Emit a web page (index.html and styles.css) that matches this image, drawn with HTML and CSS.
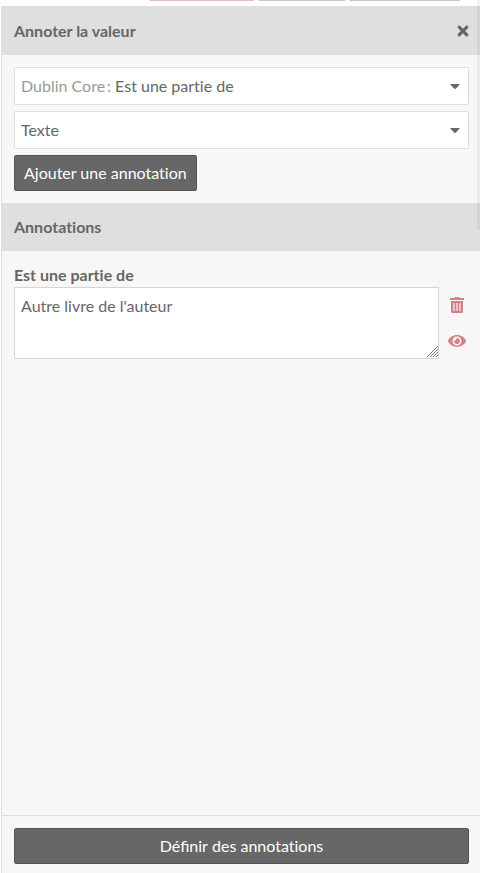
FILE: index.html
```html
<!DOCTYPE html>
<html lang="fr">
<head>
<meta charset="utf-8">
<meta name="viewport" content="width=device-width, initial-scale=1">
<title>Annoter la valeur</title>
<link rel="stylesheet" href="styles.css">
</head>
<body>
<div class="tabs" aria-hidden="true">
  <span class="tab tab-danger"></span>
  <span class="tab tab-short"></span>
  <span class="tab tab-long"></span>
</div>
<div class="scroll-thumb" aria-hidden="true"></div>
<aside class="sidebar">
  <header class="bar bar-top">
    <h3>Annoter la valeur</h3>
    <button class="icon-button" type="button" aria-label="Fermer">
      <svg width="12" height="12" viewBox="0 0 12 12"><path d="M2.2 2.2 9.8 9.8M9.8 2.2 2.2 9.8" fill="none" stroke="currentColor" stroke-width="3.1" stroke-linecap="round"/></svg>
    </button>
  </header>
  <div class="section controls">
    <div class="picker">
      <label class="prefix" for="property">Dublin Core&#8201;:</label>
      <select id="property"><option>Est une partie de</option></select>
      <svg class="caret" width="10" height="5" viewBox="0 0 10 5"><path d="M0 0H10L6 4.6Q5 5.3 4 4.6Z" fill="currentColor"/></svg>
    </div>
    <div class="picker">
      <select id="type" aria-label="Type de données"><option>Texte</option></select>
      <svg class="caret" width="10" height="5" viewBox="0 0 10 5"><path d="M0 0H10L6 4.6Q5 5.3 4 4.6Z" fill="currentColor"/></svg>
    </div>
    <button class="button" type="button">Ajouter une annotation</button>
  </div>
  <div class="bar"><h3>Annotations</h3></div>
  <div class="section annotations">
    <label class="field-label" for="annotation">Est une partie de</label>
    <div class="annotation">
      <div class="text-box">
        <textarea id="annotation">Autre livre de l'auteur</textarea>
        <svg class="grip" width="11" height="11" viewBox="0 0 11 11"><path d="M0 11 11 0M3 11 11 3M6 11 11 6M9 11 11 9" fill="none" stroke="#777" stroke-width="1"/></svg>
      </div>
      <div class="actions">
        <button class="icon-button" type="button" aria-label="Supprimer">
          <svg width="18" height="16" viewBox="0 0 18 16"><path fill="currentColor" fill-opacity=".45" d="M5 6H13V14H5Z"/><path fill="currentColor" fill-rule="evenodd" d="M2 1H6.2L6.7 .3Q7 0 7.4 0H10.6Q11 0 11.3 .3L11.8 1H16V3H2ZM3 4H15V14.500Q15 16 13.500 16H4.500Q3 16 3 14.500ZM5 6V14H7V6ZM8 6V14H10V6ZM11 6V14H13V6Z"/></svg>
        </button>
        <button class="icon-button" type="button" aria-label="Visibilité">
          <svg width="18" height="12" viewBox="0 0 18 12"><path fill="currentColor" fill-rule="evenodd" d="M9 0C4.900 0 1.700 2.300 .1 5.400Q-.2 6 .1 6.600C1.700 9.700 4.900 12 9 12S16.300 9.700 17.900 6.600Q18.200 6 17.900 5.400C16.300 2.300 13.100 0 9 0ZM9 1.500A4.500 4.500 0 1 1 9 10.500A4.500 4.500 0 1 1 9 1.500Z"/><path fill="currentColor" d="M8.200 3.100A3 3 0 1 1 6.100 5.200 1.500 1.500 0 0 0 8.200 3.100Z"/></svg>
        </button>
      </div>
    </div>
  </div>
  <footer class="footer"><button class="button" type="button"><span class="ligatures">Définir</span> des annotations</button></footer>
</aside>
</body>
</html>
```

FILE: styles.css
```css
* { box-sizing: border-box; }

body {
  margin: 0;
  min-height: 100vh;
  display: flex;
  flex-direction: column;
  background: #fff;
  color: #666;
  font: 16px/24px Lato, sans-serif;
  font-variant-ligatures: none;
}

h3 { margin: 0; font-size: 16px; line-height: 24px; font-weight: 700; }

button, select, textarea {
  font: inherit;
  font-variant-ligatures: none;
  color: inherit;
}

.ligatures { font-variant-ligatures: normal; }

.tabs {
  display: flex;
  justify-content: flex-end;
  gap: 5px;
  height: 6px;
  padding-right: 20px;
}

.tab { height: 1px; background: #c4c4c4; }
.tab-danger { width: 104px; background: #e3bfc1; }
.tab-short { width: 86px; }
.tab-long { width: 110px; }

.scroll-thumb {
  position: absolute;
  top: 0;
  right: 0;
  width: 3px;
  height: 230px;
  background: rgba(0, 0, 0, 0.05);
}

.sidebar {
  flex: 1;
  display: flex;
  flex-direction: column;
  margin-left: 1px;
  border-left: 1px solid #dfdfdf;
  background: #f7f7f7;
}

.bar {
  display: flex;
  align-items: center;
  justify-content: space-between;
  padding: 12px 11px 12px 12px;
  background: #dfdfdf;
}

.bar-top { border-top: 1px solid #dfdfdf; }

.icon-button {
  display: flex;
  padding: 0;
  border: 0;
  background: none;
  cursor: pointer;
}

.section { padding: 12px 11px 12px 12px; }

.controls {
  display: flex;
  flex-direction: column;
  align-items: flex-start;
  gap: 6px;
}

.picker {
  position: relative;
  display: flex;
  align-items: center;
  gap: 4px;
  width: 100%;
  height: 38px;
  padding-left: 6px;
  border: 1px solid #dfdfdf;
  border-radius: 2px;
  background: #fff;
}

.prefix { color: #999; white-space: nowrap; }

.picker select {
  flex: 1;
  min-width: 0;
  height: 36px;
  padding: 0 24px 0 0;
  border: 0;
  background: none;
  appearance: none;
}

.caret {
  position: absolute;
  right: 8px;
  pointer-events: none;
}

.button {
  height: 36px;
  padding: 0 9px;
  border: 1px solid #555;
  border-radius: 2px;
  background: #676767;
  color: #fff;
  cursor: pointer;
}

.annotations { flex: 1; }

.field-label { display: block; font-weight: 700; }

.annotation { display: flex; gap: 9px; }

.text-box { position: relative; flex: 1; display: flex; }

.text-box textarea {
  flex: 1;
  min-width: 0;
  height: 72px;
  padding: 6px;
  border: 1px solid #d5d5d5;
  border-radius: 0;
  background: #fff;
  resize: none;
}

.grip {
  position: absolute;
  right: 1px;
  bottom: 2px;
  pointer-events: none;
}

.actions {
  display: flex;
  flex-direction: column;
  gap: 22px;
  width: 21px;
  padding-top: 10px;
  color: #d08286;
}

.footer { padding: 12px 11px 9px 12px; border-top: 1px solid #dfdfdf; }

.footer .button { display: block; width: 100%; }
```
